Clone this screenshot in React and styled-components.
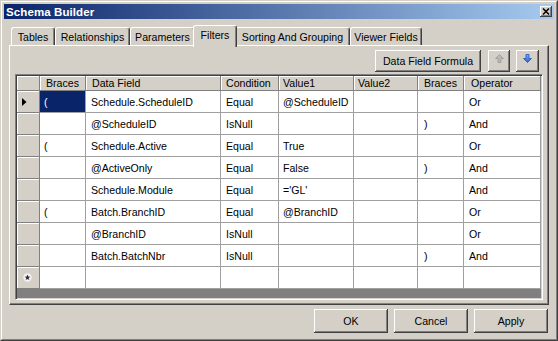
import React from "react";
import styled, { createGlobalStyle } from "styled-components";

const Global = createGlobalStyle`
  html, body { margin: 0; padding: 0; background: #d4d0c8; }
  body { font-family: "Liberation Sans", Arial, sans-serif; font-size: 10.6px; color: #000; }
  * { box-sizing: border-box; }
`;

const Window = styled.div`
  width: 558px;
  height: 341px;
  border: 1px solid;
  border-color: #d4d0c8 #404040 #404040 #d4d0c8;
  background: #d4d0c8;
`;

const Frame = styled.div`
  height: 100%;
  border: 1px solid;
  border-color: #fff #808080 #808080 #fff;
  padding: 2px;
  display: flex;
  flex-direction: column;
`;

const TitleBar = styled.div`
  height: 15px;
  flex: none;
  background: linear-gradient(to right, #0a246a, #a6caf0);
  display: flex;
  align-items: center;
  justify-content: space-between;
  padding: 0 2px 0 2px;
`;

const Title = styled.span`
  color: #fff;
  font-weight: bold;
  font-size: 11.5px;
  letter-spacing: 0.1px;
`;

const CloseBtn = styled.div`
  width: 12px;
  height: 11px;
  background: #d4d0c8;
  box-shadow: inset -1px -1px #404040, inset 1px 1px #fff, inset -2px -2px #808080;
  display: flex;
  align-items: center;
  justify-content: center;
  padding-bottom: 1px;
`;

const Client = styled.div`
  flex: 1;
  display: flex;
  flex-direction: column;
  padding: 6px 5px 4px 5px;
`;

const TabStrip = styled.div`
  height: 20px;
  flex: none;
  display: flex;
  align-items: flex-end;
  padding-left: 2px;
  position: relative;
  z-index: 1;
`;

const Tab = styled.div`
  width: ${(p) => (p.$active ? p.$w + 4 : p.$w)}px;
  height: ${(p) => (p.$active ? 22 : 18)}px;
  margin: 0 ${(p) => (p.$active ? -2 : 0)}px ${(p) => (p.$active ? -2 : 0)}px;
  background: #d4d0c8;
  border-top: 1px solid #fff;
  border-left: 1px solid #fff;
  border-right: 1px solid #404040;
  box-shadow: inset -1px 0 #808080;
  border-radius: 3px 3px 0 0;
  display: flex;
  align-items: ${(p) => (p.$active ? "flex-start" : "center")};
  justify-content: center;
  padding-top: ${(p) => (p.$active ? 3 : 0)}px;
  white-space: nowrap;
  position: relative;
  z-index: ${(p) => (p.$active ? 2 : 1)};
`;

const Panel = styled.div`
  height: 260px;
  flex: none;
  border: 1px solid;
  border-color: #fff #404040 #404040 #fff;
  box-shadow: inset -1px -1px #808080;
  display: flex;
  flex-direction: column;
  padding: 4px 5px 4px 5px;
  gap: 2px;
`;

const Toolbar = styled.div`
  height: 22px;
  flex: none;
  display: flex;
  justify-content: flex-end;
  padding-right: 4px;
`;

const RaisedButton = styled.div`
  width: ${(p) => p.$w}px;
  height: ${(p) => p.$h || 22}px;
  margin-left: ${(p) => p.$gap || 0}px;
  background: #d4d0c8;
  box-shadow: inset -1px -1px #404040, inset 1px 1px #fff, inset -2px -2px #808080;
  display: flex;
  align-items: center;
  justify-content: center;
  padding-bottom: ${(p) => p.$pb || 0}px;
  white-space: nowrap;
`;

const Grid = styled.div`
  height: 226px;
  flex: none;
  border: 1px solid;
  border-color: #808080 #fff #fff #808080;
  box-shadow: inset 1px 1px #404040, inset -1px -1px #d4d0c8;
  background: #808080;
  padding: 1px;
  display: flex;
  flex-direction: column;
  overflow: hidden;
`;

const cols = "23px 46px 135px 58px 75px 64px 46px 77px";

const HeaderRow = styled.div`
  height: 15px;
  flex: none;
  display: grid;
  grid-template-columns: ${cols};
`;

const HeaderCell = styled.div`
  background: #d4d0c8;
  border-right: 1px solid #808080;
  border-bottom: 1px solid #808080;
  box-shadow: inset 1px 1px #fff;
  display: flex;
  align-items: center;
  justify-content: ${(p) => (p.$center ? "center" : "flex-start")};
  padding-left: ${(p) => (p.$center ? 0 : p.$pad)}px;
  white-space: nowrap;
`;

const Row = styled.div`
  height: 22px;
  flex: none;
  display: grid;
  grid-template-columns: ${cols};
  background: #fff;
`;

const RowHeader = styled.div`
  background: #d4d0c8;
  border-right: 1px solid #808080;
  border-bottom: 1px solid #808080;
  box-shadow: inset 1px 1px #fff;
  display: flex;
  align-items: center;
  padding-left: ${(p) => p.$pad || 5}px;
`;

const Cell = styled.div`
  border-right: 1px solid #a0a0a0;
  border-bottom: 1px solid #a0a0a0;
  background: ${(p) => (p.$selected ? "#0a246a" : "#fff")};
  color: ${(p) => (p.$selected ? "#fff" : "#000")};
  display: flex;
  align-items: center;
  padding-left: ${(p) => p.$pad}px;
  white-space: nowrap;
  overflow: hidden;
`;

const Footer = styled.div`
  flex: none;
  display: flex;
  justify-content: flex-end;
  gap: 6px;
  margin-top: 4px;
  padding-right: 1px;
`;

const columns = [
  { name: "Braces", center: true, pad: 4 },
  { name: "Data Field", pad: 6 },
  { name: "Condition", pad: 5 },
  { name: "Value1", pad: 4 },
  { name: "Value2", pad: 4 },
  { name: "Braces", center: true, pad: 6 },
  { name: "Operator", pad: 7 },
];

const cellPads = [4, 5, 5, 4, 4, 6, 5];

const rows = [
  ["(", "Schedule.ScheduleID", "Equal", "@ScheduleID", "", "", "Or"],
  ["", "@ScheduleID", "IsNull", "", "", ")", "And"],
  ["(", "Schedule.Active", "Equal", "True", "", "", "Or"],
  ["", "@ActiveOnly", "Equal", "False", "", ")", "And"],
  ["", "Schedule.Module", "Equal", "='GL'", "", "", "And"],
  ["(", "Batch.BranchID", "Equal", "@BranchID", "", "", "Or"],
  ["", "@BranchID", "IsNull", "", "", "", "Or"],
  ["", "Batch.BatchNbr", "IsNull", "", "", ")", "And"],
];

const tabs = [
  { label: "Tables", w: 44 },
  { label: "Relationships", w: 75 },
  { label: "Parameters", w: 65 },
  { label: "Filters", w: 40, active: true },
  { label: "Sorting And Grouping", w: 115 },
  { label: "Viewer Fields", w: 72 },
];

const CloseIcon = () => (
  <svg width="8" height="7" viewBox="0 0 8 7">
    <path d="M1 0.5 L7 6.5 M7 0.5 L1 6.5" stroke="#000" strokeWidth="1.5" />
  </svg>
);

const UpIcon = () => (
  <svg width="9" height="9" viewBox="0 0 9 9">
    <path d="M4.5 0.5 L8.5 4.5 L6 4.5 L6 8.5 L3 8.5 L3 4.5 L0.5 4.5 Z" fill="#b8b8b8" stroke="#9a9a9a" strokeWidth="0.8" />
  </svg>
);

const DownIcon = () => (
  <svg width="9" height="9" viewBox="0 0 9 9">
    <defs>
      <linearGradient id="dg" x1="0" y1="0" x2="0" y2="1">
        <stop offset="0" stopColor="#7fb0f8" />
        <stop offset="1" stopColor="#2a5fd0" />
      </linearGradient>
    </defs>
    <path d="M3 0.5 L6 0.5 L6 4.5 L8.5 4.5 L4.5 8.5 L0.5 4.5 L3 4.5 Z" fill="url(#dg)" stroke="#2050b8" strokeWidth="0.8" />
  </svg>
);

const CurrentIcon = () => (
  <svg width="5" height="8" viewBox="0 0 5 8">
    <path d="M0 0 L4.5 4 L0 8 Z" fill="#000" />
  </svg>
);

const NewRowIcon = () => (
  <svg width="9" height="9" viewBox="0 0 9 9">
    <circle cx="4.5" cy="4.5" r="4.2" fill="#f2f2f2" />
    <path d="M4.5 1.6 L5.3 3.6 L7.3 3.7 L5.7 5 L6.3 7.1 L4.5 5.9 L2.7 7.1 L3.3 5 L1.7 3.7 L3.7 3.6 Z" fill="#303030" />
  </svg>
);

export default function App() {
  return (
    <>
      <Global />
      <Window>
        <Frame>
          <TitleBar>
            <Title>Schema Builder</Title>
            <CloseBtn>
              <CloseIcon />
            </CloseBtn>
          </TitleBar>
          <Client>
            <TabStrip>
              {tabs.map((t) => (
                <Tab key={t.label} $w={t.w} $active={t.active}>
                  {t.label}
                </Tab>
              ))}
            </TabStrip>
            <Panel>
              <Toolbar>
                <RaisedButton $w={106}>Data Field Formula</RaisedButton>
                <RaisedButton $w={22} $gap={7} $pb={5}>
                  <UpIcon />
                </RaisedButton>
                <RaisedButton $w={23} $gap={6} $pb={5}>
                  <DownIcon />
                </RaisedButton>
              </Toolbar>
              <Grid>
                <HeaderRow>
                  <HeaderCell />
                  {columns.map((c, i) => (
                    <HeaderCell key={i} $center={c.center} $pad={c.pad}>
                      {c.name}
                    </HeaderCell>
                  ))}
                </HeaderRow>
                {rows.map((r, ri) => (
                  <Row key={ri}>
                    <RowHeader>{ri === 0 ? <CurrentIcon /> : null}</RowHeader>
                    {r.map((v, ci) => (
                      <Cell key={ci} $pad={cellPads[ci]} $selected={ri === 0 && ci === 0}>
                        {v}
                      </Cell>
                    ))}
                  </Row>
                ))}
                <Row>
                  <RowHeader $pad={6}>
                    <NewRowIcon />
                  </RowHeader>
                  {cellPads.map((p, ci) => (
                    <Cell key={ci} $pad={p} />
                  ))}
                </Row>
              </Grid>
            </Panel>
            <Footer>
              <RaisedButton $w={74} $h={24}>OK</RaisedButton>
              <RaisedButton $w={74} $h={24}>Cancel</RaisedButton>
              <RaisedButton $w={74} $h={24}>Apply</RaisedButton>
            </Footer>
          </Client>
        </Frame>
      </Window>
    </>
  );
}
